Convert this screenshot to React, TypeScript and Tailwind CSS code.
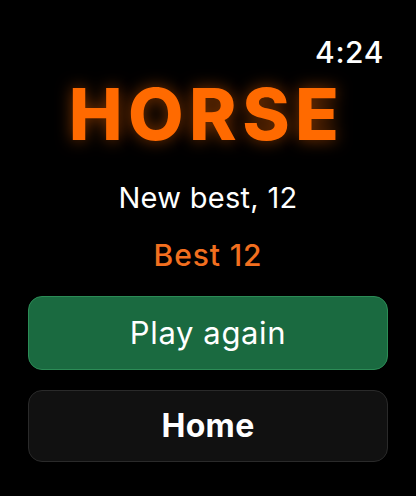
import React from 'react';

const App: React.FC = () => {
  return (
    <div className="w-[416px] h-[496px] bg-black text-white overflow-hidden flex flex-col font-['Inter',sans-serif]">
      {/* Status bar */}
      <div className="flex justify-end pr-[32px] pt-[33px] h-[72px]">
        <span className="text-[30px] leading-[38px] font-medium tracking-[0.02em]">4:24</span>
      </div>

      {/* Title */}
      <div className="flex justify-center h-[86px]">
        <h1 className="text-[72px] leading-[84px] font-extrabold tracking-[0.075em] pr-[0.04em] text-[#ff6a00] [text-shadow:0_0_16px_rgba(255,106,0,0.5)]">
          HORSE
        </h1>
      </div>

      {/* Scores */}
      <div className="flex flex-col items-center mt-[22px]">
        <p className="text-[29px] leading-[36px] tracking-[0.01em] text-white">New best, 12</p>
        <p className="mt-[21px] text-[30px] leading-[36px] font-medium tracking-[0.03em] text-[#f26f1f]">Best 12</p>
      </div>

      {/* Actions */}
      <div className="flex flex-col gap-[20px] px-[28px] mt-[23px]">
        <button className="h-[74px] rounded-[14px] bg-[#1a6a40] border border-[#2c8c56] text-[31px] tracking-[0.02em] text-white">
          Play again
        </button>
        <button className="h-[72px] rounded-[14px] bg-[#111111] border border-[#2a2a2a] text-[32px] font-bold tracking-[0.01em] text-white">
          Home
        </button>
      </div>
    </div>
  );
};

export default App;
